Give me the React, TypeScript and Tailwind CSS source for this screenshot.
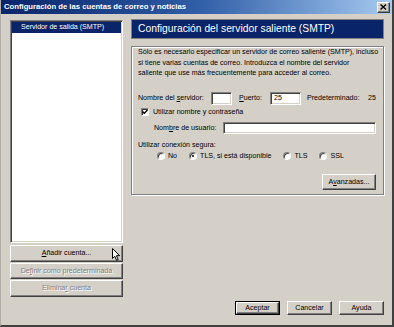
import React from "react";

function Btn({
  children,
  className = "",
  def = false,
  disabled = false,
}: {
  children: React.ReactNode;
  className?: string;
  def?: boolean;
  disabled?: boolean;
}) {
  return (
    <div className={`flex bg-[#d4d0c8] ${def ? "border border-black" : ""} ${className}`}>
      <div
        className={`flex-1 flex items-center justify-center border border-t-white border-l-white border-r-[#404040] border-b-[#404040] shadow-[inset_-1px_-1px_0_#808080] ${
          disabled ? "text-[#808080] [text-shadow:1px_1px_0_#fff]" : "text-black"
        }`}
      >
        {children}
      </div>
    </div>
  );
}

function Field({ className = "", value = "" }: { className?: string; value?: string }) {
  return (
    <div
      className={`flex items-center bg-white border border-t-[#808080] border-l-[#808080] border-r-white border-b-white shadow-[inset_1px_1px_0_#404040,inset_-1px_-1px_0_#d4d0c8] pl-[3px] ${className}`}
    >
      {value}
    </div>
  );
}

function Radio({ checked = false }: { checked?: boolean }) {
  return (
    <span className="flex items-center justify-center w-[8px] h-[8px] rounded-full bg-white border border-t-[#808080] border-l-[#808080] border-r-white border-b-white shadow-[inset_1px_1px_0_#404040]">
      {checked && <span className="block w-[2.5px] h-[2.5px] rounded-full bg-black" />}
    </span>
  );
}

export default function App() {
  return (
    <div className="relative w-[394px] h-[327px] bg-[#d4d0c8] overflow-hidden font-['Liberation_Sans',Arial,sans-serif] text-[7.1px] leading-[10px] text-black border-l border-l-[#b0ada6] border-r-2 border-r-[#404040] border-b-2 border-b-[#404040]">
      {/* title bar */}
      <div className="h-[14px] flex items-center justify-between pl-[3px] pr-[2px] bg-linear-to-r from-[#0a246a] via-[#2f5da6] to-[#a6caf0]">
        <span className="text-white font-bold text-[7.7px] leading-none">
          Configuración de las cuentas de correo y noticias
        </span>
        <div className="w-[13px] h-[11px] flex items-center justify-center bg-[#d4d0c8] border border-t-white border-l-white border-r-[#404040] border-b-[#404040] shadow-[inset_-1px_-1px_0_#808080]">
          <svg width="7" height="6" viewBox="0 0 7 6">
            <path d="M0.5 0.5 L6 5.5 M6 0.5 L0.5 5.5" stroke="#000" strokeWidth="1.4" />
          </svg>
        </div>
      </div>

      {/* body */}
      <div className="flex pt-[5px] pl-[9px]">
        {/* left column */}
        <div className="w-[113px] mt-[1px] flex flex-col">
          <div className="h-[223px] bg-white border border-t-[#808080] border-l-[#808080] border-r-white border-b-white shadow-[inset_1px_1px_0_#404040,inset_-1px_-1px_0_#d4d0c8] p-[1px]">
            <div className="h-[10.5px] bg-[#0a246a] text-white pl-[9px] flex items-center">
              Servidor de salida (SMTP)
            </div>
          </div>
          <div className="flex flex-col gap-[1px] mt-[2px]">
            <Btn className="h-[16.5px]">
              <span>
                <span className="underline">A</span>ñadir cuenta...
              </span>
            </Btn>
            <Btn className="h-[16.5px]" disabled>
              <span>
                De<span className="underline">f</span>inir como predeterminada
              </span>
            </Btn>
            <Btn className="h-[16.5px]" disabled>
              <span>
                Elimina<span className="underline">r</span> cuenta
              </span>
            </Btn>
          </div>
        </div>

        {/* right column */}
        <div className="w-[253px] ml-[8px] flex flex-col">
          <div className="h-[20px] bg-[#0a246a] border border-[#808080] text-white text-[10.3px] leading-none flex items-center pl-[6px]">
            Configuración del servidor saliente (SMTP)
          </div>

          <div className="mt-[7px] h-[149px] border border-[#808080] shadow-[inset_1px_1px_0_#fff,1px_1px_0_#fff] pl-[6px] pr-[7px] flex flex-col">
            <p className="leading-[10.5px] -mr-[6px] whitespace-nowrap">
              Sólo es necesario especificar un servidor de correo saliente (SMTP), incluso
              <br />
              si tiene varias cuentas de correo. Introduzca el nombre del servidor
              <br />
              saliente que use más frecuentemente para acceder al correo.
            </p>

            <div className="mt-[13px] h-[13px] flex items-center">
              <span className="w-[73px]">
                Nombre del <span className="underline">s</span>ervidor:
              </span>
              <Field className="w-[21px] h-[13px]" />
              <span className="w-[31px] ml-[7px]">
                <span className="underline">P</span>uerto:
              </span>
              <Field className="w-[31px] h-[13px]" value="25" />
              <span className="ml-[6px] flex-1">Predeterminado:</span>
              <span>25</span>
            </div>

            <div className="mt-[3px] h-[9px] flex items-center pl-[3px]">
              <span className="w-[8px] h-[8px] flex items-center justify-center bg-white border border-t-[#808080] border-l-[#808080] border-r-white border-b-white shadow-[inset_1px_1px_0_#404040]">
                <svg width="6" height="6" viewBox="0 0 6 6">
                  <path d="M0.5 2.5 L2.3 4.3 L5.5 1" stroke="#000" strokeWidth="1.3" fill="none" />
                </svg>
              </span>
              <span className="ml-[4px]">Utilizar nombre y contraseña</span>
            </div>

            <div className="mt-[5px] h-[12px] flex items-center pl-[16px]">
              <span className="w-[69px]">
                Nom<span className="underline">b</span>re de usuario:
              </span>
              <Field className="flex-1 h-[12px]" />
            </div>

            <div className="mt-[6px]">Utilizar conexión segura:</div>

            <div className="mt-[2px] h-[9px] flex items-center pl-[19px] gap-[12px]">
              <span className="flex items-center gap-[3px]">
                <Radio />
                <span>No</span>
              </span>
              <span className="flex items-center gap-[3px]">
                <Radio checked />
                <span>TLS, si está disponible</span>
              </span>
              <span className="flex items-center gap-[3px]">
                <Radio />
                <span>TLS</span>
              </span>
              <span className="flex items-center gap-[3px]">
                <Radio />
                <span>SSL</span>
              </span>
            </div>

            <div className="mt-[13px] flex justify-end">
              <Btn className="w-[54px] h-[16px]">
                <span>
                  A<span className="underline">v</span>anzadas...
                </span>
              </Btn>
            </div>
          </div>

          <div className="mt-[106px] flex justify-end gap-[7px]">
            <Btn className="w-[45px] h-[14px]" def>
              Aceptar
            </Btn>
            <Btn className="w-[45px] h-[14px]">Cancelar</Btn>
            <Btn className="w-[45px] h-[14px]">Ayuda</Btn>
          </div>
        </div>
      </div>

      {/* mouse cursor */}
      <svg className="absolute left-[111px] top-[248px]" width="9" height="13" viewBox="0 0 9 13">
        <path d="M0.5 0.5 L0.5 10.5 L2.8 8.3 L4.6 12.3 L6.2 11.6 L4.4 7.7 L7.7 7.7 Z" fill="#fff" stroke="#000" strokeWidth="1" strokeLinejoin="miter" />
      </svg>
    </div>
  );
}
